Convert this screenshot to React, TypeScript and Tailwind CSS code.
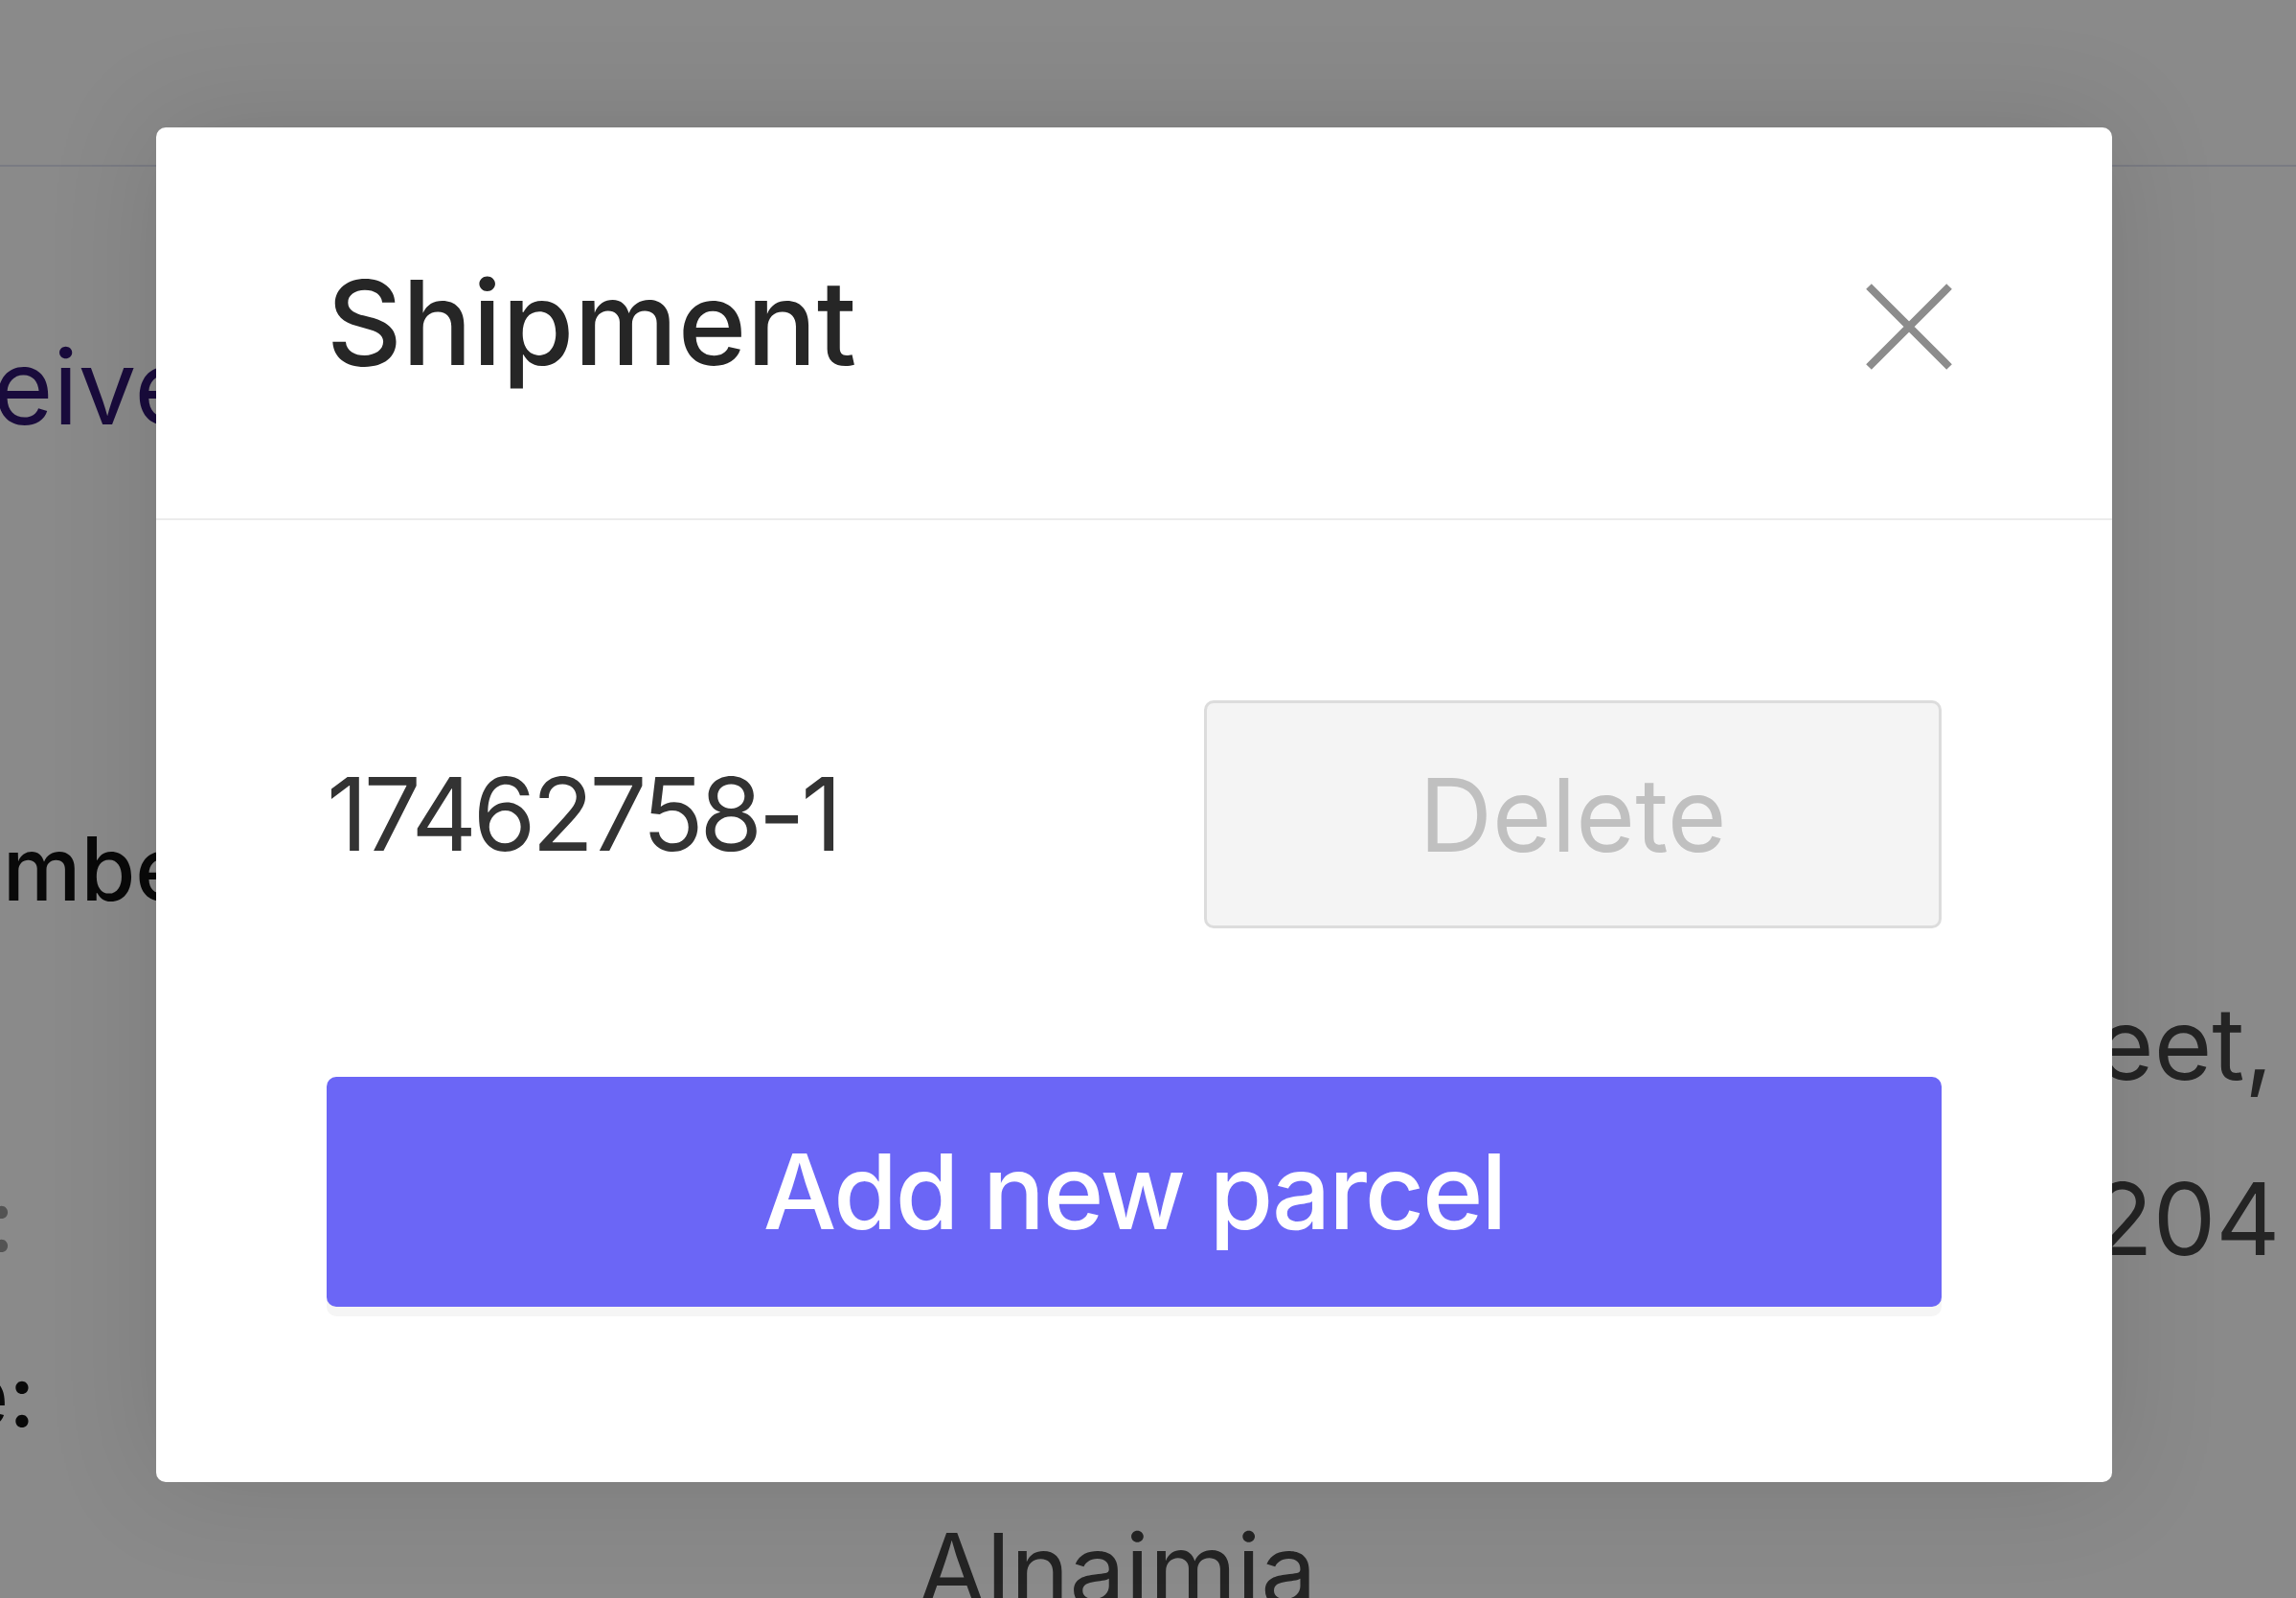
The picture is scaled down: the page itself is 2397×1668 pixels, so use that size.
import { useState } from 'react';

const rows = [
  { label: 'Phone Number:', value: '+966 50 123 4567', labelClass: 'text-[#111]' },
  { label: 'Street:', value: '82261 King Abdulaziz Street,', labelClass: 'text-[#111]' },
  { label: 'Postcode:', value: 'Riyadh, Saudi Arabia - 12204', labelClass: 'text-[#9a9a9a]' },
  { label: 'Full Name:', value: 'Mohammed Ali', labelClass: 'text-[#111]' },
  { label: 'City:', value: 'Alnaimia', labelClass: 'text-[#111]' },
];

function CloseIcon() {
  return (
    <svg width="96" height="96" viewBox="0 0 96 96" fill="none">
      <path d="M6 6L90 90M90 6L6 90" stroke="#8c8c8c" strokeWidth="8" />
    </svg>
  );
}

export default function App() {
  const [parcels] = useState(['17462758-1']);

  return (
    <div className="relative h-[1668px] w-full overflow-hidden bg-white font-['Inter',sans-serif]">
      {/* page behind the dialog */}
      <div className="h-[174px] border-b-2 border-[#e2e3f3]" />
      <h1 className="-ml-[200px] mt-[176px] whitespace-nowrap text-[108px] leading-none text-[#2f1570]">
        Receiver details
      </h1>
      <div className="-ml-[426px] mt-[357px] leading-[183px] text-[#444]">
        {rows.map((r) => (
          <div key={r.label} className="grid grid-cols-[1384px_auto] whitespace-nowrap">
            <span className={`text-[92px] font-medium ${r.labelClass}`}>{r.label}</span>
            <span className="text-[104px]">{r.value}</span>
          </div>
        ))}
      </div>

      {/* overlay + dialog */}
      <div className="absolute inset-0 flex items-start bg-black/[0.46] pl-[163px] pt-[133px]">
        <div className="w-[2042px] rounded-[10px] bg-white shadow-[0_0_120px_rgba(0,0,0,0.12)]">
          <div className="flex h-[410px] items-center justify-between border-b-2 border-[#ececec] pl-[178px] pr-[164px]">
            <h2 className="text-[122px] font-medium leading-none text-[#262626]">Shipment</h2>
            <button className="flex h-[96px] w-[96px] items-center justify-center pt-[8px]">
              <CloseIcon />
            </button>
          </div>
          <div className="px-[178px] pb-[183px] pt-[188px]">
            {parcels.map((p) => (
              <div key={p} className="flex items-center justify-between">
                <span className="text-[106px] leading-none tracking-[-0.04em] text-[#333]">{p}</span>
                <button className="flex h-[238px] w-[770px] items-center justify-center rounded-[10px] border-[3px] border-[#dcdcdc] bg-[#f4f4f4] text-[106px] text-[#c0c0c0]">
                  Delete
                </button>
              </div>
            ))}
            <button className="mt-[155px] flex h-[240px] w-full items-center justify-center rounded-[10px] bg-[#6b66f6] text-[108px] font-medium tracking-[-0.02em] text-white shadow-[0_10px_0_rgba(0,0,0,0.04)]">
              Add new parcel
            </button>
          </div>
        </div>
      </div>
    </div>
  );
}
